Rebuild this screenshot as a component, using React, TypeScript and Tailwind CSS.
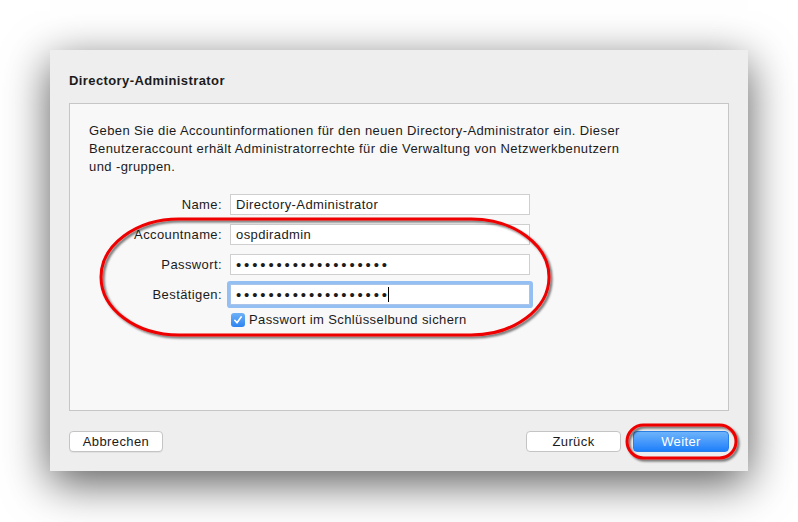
import React from 'react';

const dots = (n: number) => '•'.repeat(n);

const Field: React.FC<{ label: string; children: React.ReactNode; focused?: boolean }> = ({ label, children, focused }) => (
  <div className="flex items-center h-[21px]">
    <div className="w-[141px] text-right pr-[8px]">{label}</div>
    <div
      className={
        focused
          ? 'w-[300px] h-[21px] bg-white border border-[#a9c4e8] shadow-[0_0_0_3px_#94bff2] flex items-center pl-[5px] rounded-[1px]'
          : 'w-[300px] h-[21px] bg-white border border-[#cfcfcf] flex items-center pl-[5px]'
      }
    >
      {children}
    </div>
  </div>
);

const App: React.FC = () => {
  return (
    <div className="relative w-[798px] h-[522px] bg-white overflow-hidden pt-[50px] pl-[50px] font-['Liberation_Sans',Arial,sans-serif] text-[13px] tracking-[0.4px] text-[#1b1b1b]">
      {/* Dialog */}
      <div className="w-[698px] h-[421px] bg-[#eeeeee] shadow-[0_12px_42px_rgba(0,0,0,0.65)] px-[19px] flex flex-col">
        <div className="h-[53px] pt-[21px] font-bold">Directory-Administrator</div>

        <div className="h-[308px] bg-[#f8f8f8] border border-[#c6c6c6] pl-[19px] pt-[18px]">
          <p className="leading-[18px]">
            Geben Sie die Accountinformationen für den neuen Directory-Administrator ein. Dieser
            <br />
            Benutzeraccount erhält Administratorrechte für die Verwaltung von Netzwerkbenutzern
            <br />
            und -gruppen.
          </p>

          <div className="mt-[18px] flex flex-col gap-[9px]">
            <Field label="Name:">Directory-Administrator</Field>
            <Field label="Accountname:">ospdiradmin</Field>
            <Field label="Passwort:">
              <span className="text-[15px] tracking-[2.85px] leading-none">{dots(19)}</span>
            </Field>
            <Field label="Bestätigen:" focused>
              <span className="text-[15px] tracking-[2.85px] leading-none">{dots(19)}</span>
              <span className="w-px h-[15px] bg-black -ml-[2px]" />
            </Field>
          </div>

          <label className="mt-[7px] ml-[142px] flex items-center gap-[4px] h-[16px]">
            <span className="w-[14px] h-[14px] rounded-[3px] bg-gradient-to-b from-[#6fb1f7] to-[#2b83f0] flex items-center justify-center">
              <svg width="10" height="10" viewBox="0 0 10 10">
                <path d="M1.8 5.3 L4 7.8 L8.3 1.8" fill="none" stroke="white" strokeWidth="1.6" strokeLinecap="round" strokeLinejoin="round" />
              </svg>
            </span>
            <span>Passwort im Schlüsselbund sichern</span>
          </label>
        </div>

        <div className="flex items-center mt-[20px] h-[21px]">
          <button className="w-[94px] h-[21px] bg-white border border-[#c4c4c4] rounded-[4px] shadow-[0_1px_0_rgba(0,0,0,0.05)]">
            Abbrechen
          </button>
          <div className="flex-1" />
          <button className="w-[95px] h-[21px] bg-white border border-[#c4c4c4] rounded-[4px]">Zurück</button>
          <button className="ml-[12px] w-[96px] h-[21px] rounded-[4px] text-white bg-gradient-to-b from-[#6cb3fa] to-[#1a7ffa] border border-[#2a7fe6]">
            Weiter
          </button>
        </div>
      </div>

      {/* Red annotations */}
      <svg className="absolute left-0 top-0 pointer-events-none" width="798" height="522">
        <defs>
          <filter id="sh" x="-10%" y="-10%" width="130%" height="130%">
            <feDropShadow dx="2" dy="2" stdDeviation="1.2" floodColor="#000" floodOpacity="0.55" />
          </filter>
        </defs>
        <rect x="101" y="219" width="448" height="116" rx="78" ry="58" fill="none" stroke="#ee0000" strokeWidth="3" filter="url(#sh)" />
        <rect x="627" y="425" width="109" height="33" rx="16.5" ry="16.5" fill="none" stroke="#ee0000" strokeWidth="3" filter="url(#sh)" />
      </svg>
    </div>
  );
};

export default App;
